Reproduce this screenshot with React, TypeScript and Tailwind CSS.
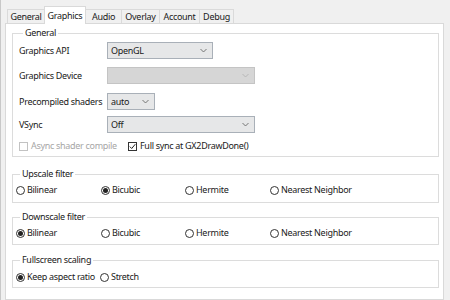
import React from "react";

const tabs = [
    { name: "General", w: "w-[38px]" },
    { name: "Graphics", w: "w-[42px]", active: true },
    { name: "Audio", w: "w-[37px]" },
    { name: "Overlay", w: "w-[39px]" },
    { name: "Account", w: "w-[41px]" },
    { name: "Debug", w: "w-[35px]" },
];

function Chevron(props: { color?: string }) {
    return (
        <svg width="7" height="5" viewBox="0 0 7 5" className="shrink-0">
            <path d="M0.5 1 L3.5 4 L6.5 1" fill="none" stroke={props.color || "#606060"} strokeWidth="0.9" />
        </svg>
    );
}

function Combo(props: { value?: string; w: string; h?: string; disabled?: boolean }) {
    return (
        <div
            className={
                props.disabled
                    ? `${props.w} h-[17px] flex items-center justify-between pl-[3px] pr-[5px] border border-[#c4c4c4] bg-[#d6d6d6]`
                    : `${props.w} h-[17px] flex items-center justify-between pl-[3px] pr-[5px] border border-[#a9b0b8] bg-[#e6e7e8]`
            }
        >
            <span>{props.value}</span>
            <Chevron color={props.disabled ? "#b4b4b4" : "#6a6a6a"} />
        </div>
    );
}

function Radio(props: { label: string; checked?: boolean; w?: string }) {
    return (
        <div className={`flex items-center gap-[2px] ${props.w || ""}`}>
            <div className="w-[9px] h-[9px] rounded-full border border-[#333] flex items-center justify-center">
                {props.checked && <div className="w-[5px] h-[5px] rounded-full bg-[#222]" />}
            </div>
            <span>{props.label}</span>
        </div>
    );
}

function GroupLabel(props: { children: React.ReactNode }) {
    return (
        <div className="-mt-[7px] ml-[4px] w-fit bg-white px-[2px] leading-[12px]">
            {props.children}
        </div>
    );
}

export default function App() {
    return (
        <div className="w-[450px] h-[300px] overflow-hidden bg-[#f0f0f0] flex border-l border-[#c8c8c8] font-['Noto_Sans',sans-serif] text-[9px] tracking-[-0.3px] text-[#1a1a1a]">
            <div className="pl-[4px] flex flex-col">
                {/* tabs */}
                <div className="h-[23px] flex items-end pl-[2px]">
                    {tabs.map((t, i) =>
                        t.active ? (
                            <div
                                key={t.name}
                                className={`${t.w} h-[18px] -mb-px relative z-10 -ml-px bg-white border border-b-0 border-[#d9d9d9] flex items-center justify-center`}
                            >
                                {t.name}
                            </div>
                        ) : (
                            <div
                                key={t.name}
                                className={`${t.w} h-[14px] ${i > 0 ? "-ml-px" : ""} bg-[#f0f0f0] border border-b-0 border-[#dadada] flex items-center justify-center`}
                            >
                                {t.name}
                            </div>
                        )
                    )}
                </div>

                {/* panel */}
                <div className="w-[439px] flex-1 bg-white border border-[#d9d9d9] pl-[6px] pr-[4px] pt-[9px]">
                    {/* General */}
                    <div className="border border-[#dcdcdc] pl-[6px] pb-[4px]">
                        <GroupLabel>General</GroupLabel>
                        <div className="mt-[3px] flex items-center">
                            <span className="w-[88px]">Graphics API</span>
                            <Combo value="OpenGL" w="w-[106px]" />
                        </div>
                        <div className="mt-[8px] flex items-center">
                            <span className="w-[88px]">Graphics Device</span>
                            <Combo w="w-[148px]" disabled />
                        </div>
                        <div className="mt-[9px] flex items-center">
                            <span className="w-[88px]">Precompiled shaders</span>
                            <Combo value="auto" w="w-[48px]" />
                        </div>
                        <div className="mt-[6px] flex items-center">
                            <span className="w-[88px]">VSync</span>
                            <Combo value="Off" w="w-[148px]" />
                        </div>
                        <div className="mt-[7px] h-[12px] flex items-center">
                            <div className="w-[109px] flex items-center gap-[3px] text-[#a6a6a6]">
                                <div className="w-[9px] h-[9px] border border-[#c2c2c2]" />
                                <span>Async shader compile</span>
                            </div>
                            <div className="flex items-center gap-[3px]">
                                <div className="w-[9px] h-[9px] border border-[#333] flex items-center justify-center">
                                    <svg width="7" height="7" viewBox="0 0 7 7">
                                        <path d="M0.8 3.6 L2.7 5.5 L6.3 1.2" fill="none" stroke="#222" strokeWidth="1" />
                                    </svg>
                                </div>
                                <span>Full sync at GX2DrawDone()</span>
                            </div>
                        </div>
                    </div>

                    {/* Upscale filter */}
                    <div className="mt-[17px] border border-[#dcdcdc] pl-[3px] pb-[6px]">
                        <GroupLabel>Upscale filter</GroupLabel>
                        <div className="mt-[4px] h-[12px] flex items-center">
                            <Radio label="Bilinear" w="w-[85px]" />
                            <Radio label="Bicubic" checked w="w-[84px]" />
                            <Radio label="Hermite" w="w-[85px]" />
                            <Radio label="Nearest Neighbor" />
                        </div>
                    </div>

                    {/* Downscale filter */}
                    <div className="mt-[14px] border border-[#dcdcdc] pl-[3px] pb-[5px]">
                        <GroupLabel>Downscale filter</GroupLabel>
                        <div className="mt-[4px] h-[12px] flex items-center">
                            <Radio label="Bilinear" checked w="w-[85px]" />
                            <Radio label="Bicubic" w="w-[84px]" />
                            <Radio label="Hermite" w="w-[85px]" />
                            <Radio label="Nearest Neighbor" />
                        </div>
                    </div>

                    {/* Fullscreen scaling */}
                    <div className="mt-[15px] border border-[#dcdcdc] pl-[3px] pb-[4px]">
                        <GroupLabel>Fullscreen scaling</GroupLabel>
                        <div className="mt-[5px] h-[12px] flex items-center gap-[5px]">
                            <Radio label="Keep aspect ratio" checked />
                            <Radio label="Stretch" />
                        </div>
                    </div>
                </div>
            </div>
        </div>
    );
}
